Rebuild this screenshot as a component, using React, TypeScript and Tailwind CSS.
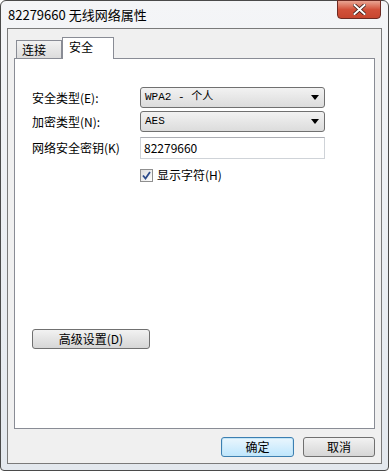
import React from "react";

const cjk = { fontFamily: '"Noto Sans CJK SC", "Noto Sans", sans-serif' };
const mono = { fontFamily: '"Liberation Mono", "Noto Sans CJK SC", monospace' };

function Select({ value }: { value: string }) {
  return (
    <div className="flex items-center justify-between w-[185px] h-[21px] rounded-[3px] border border-[#707070] bg-gradient-to-b from-[#f2f2f2] to-[#dcdcdc] pl-[4px] pr-[5px]">
      <span className="text-[11px] leading-none text-black" style={mono}>
        {value}
      </span>
      <svg width="8" height="5" viewBox="0 0 8 5">
        <path d="M0 0 L8 0 L4 5 Z" fill="#000" />
      </svg>
    </div>
  );
}

function Button({ label, primary }: { label: string; primary?: boolean }) {
  return (
    <div
      className={
        "flex items-center justify-center h-[20px] rounded-[3px] border text-[12px] text-black " +
        (primary
          ? "border-[#3c7fb1] bg-gradient-to-b from-[#eaf6fd] to-[#bee6fd] shadow-[inset_0_0_0_1px_#c4e5f6]"
          : "border-[#707070] bg-gradient-to-b from-[#f2f2f2] to-[#d6d6d6]")
      }
      style={cjk}
    >
      {label}
    </div>
  );
}

export default function App() {
  return (
    <div className="w-[389px] h-[471px] bg-white">
      <div className="w-[389px] h-[471px] flex flex-col rounded-t-[6px] rounded-b-[4px] border border-[#4a4a4a] bg-gradient-to-b from-[#f4f5f7] to-[#e3e8ee]">
        {/* barre de titre */}
        <div className="h-[27px] flex items-start justify-between pl-[7px] pr-[7px]">
          <span className="mt-[6px] text-[13px] leading-[16px] text-black" style={cjk}>
            82279660 无线网络属性
          </span>
          <div className="w-[44px] h-[19px] -mt-px rounded-b-[4px] border border-[#6d2a22] bg-gradient-to-b from-[#e8a493] via-[#d2513a] to-[#c7462f] flex items-center justify-center">
            <svg width="13" height="11" viewBox="0 0 13 11">
              <path
                d="M1.5 1 L11.5 10 M11.5 1 L1.5 10"
                stroke="#3a1c18"
                strokeWidth="3.6"
                strokeLinecap="square"
              />
              <path
                d="M1.5 1 L11.5 10 M11.5 1 L1.5 10"
                stroke="#ffffff"
                strokeWidth="2"
                strokeLinecap="square"
              />
            </svg>
          </div>
        </div>

        {/* zone client */}
        <div className="flex-1 mx-[6px] mb-[6px] border border-[#7a7a7a] bg-[#f0f0f0] flex flex-col px-[6px] pt-[7px]">
          {/* onglets */}
          <div className="flex items-end h-[22px] pl-[2px]">
            <div
              className="h-[18px] w-[46px] border border-b-0 border-[#898c95] bg-gradient-to-b from-[#f2f2f2] to-[#dcdcdc] text-[12px] leading-[18px] pl-[5px] text-black"
              style={cjk}
            >
              连接
            </div>
            <div
              className="relative z-10 h-[22px] w-[52px] -mb-px border border-b-0 border-[#898c95] bg-white text-[12px] leading-[18px] pl-[6px] text-black"
              style={cjk}
            >
              安全
            </div>
          </div>

          {/* panneau */}
          <div className="h-[371px] border border-[#898c95] bg-white pl-[17px] pt-[28px] flex flex-col">
            <div className="flex items-center h-[21px]">
              <span className="w-[108px] text-[12px] text-black" style={cjk}>
                安全类型(E):
              </span>
              <Select value="WPA2 - 个人" />
            </div>
            <div className="flex items-center h-[21px] mt-[3px]">
              <span className="w-[108px] text-[12px] text-black" style={cjk}>
                加密类型(N):
              </span>
              <Select value="AES" />
            </div>
            <div className="flex items-center h-[22px] mt-[5px]">
              <span className="w-[108px] text-[12px] text-black" style={cjk}>
                网络安全密钥(K)
              </span>
              <div className="w-[185px] h-[22px] border border-[#cfd3d8] border-t-[#abadb3] bg-white pl-[3px] flex items-center">
                <span className="text-[12px] text-black" style={cjk}>
                  82279660
                </span>
              </div>
            </div>
            <div className="flex items-center mt-[7px] ml-[108px]">
              <div className="w-[13px] h-[13px] border border-[#8f8f8f] bg-gradient-to-br from-[#dcdcdc] to-[#ffffff] flex items-center justify-center">
                <svg width="9" height="9" viewBox="0 0 9 9">
                  <path d="M1 4.5 L3.5 7.5 L8 1" stroke="#2b4a8a" strokeWidth="1.8" fill="none" />
                </svg>
              </div>
              <span className="ml-[4px] text-[12px] text-black" style={cjk}>
                显示字符(H)
              </span>
            </div>

            <div className="mt-[145px] w-[118px]">
              <Button label="高级设置(D)" />
            </div>
          </div>

          {/* boutons */}
          <div className="flex justify-end gap-[9px] mt-[8px]">
            <div className="w-[73px]">
              <Button label="确定" primary />
            </div>
            <div className="w-[72px]">
              <Button label="取消" />
            </div>
          </div>
        </div>
      </div>
    </div>
  );
}
